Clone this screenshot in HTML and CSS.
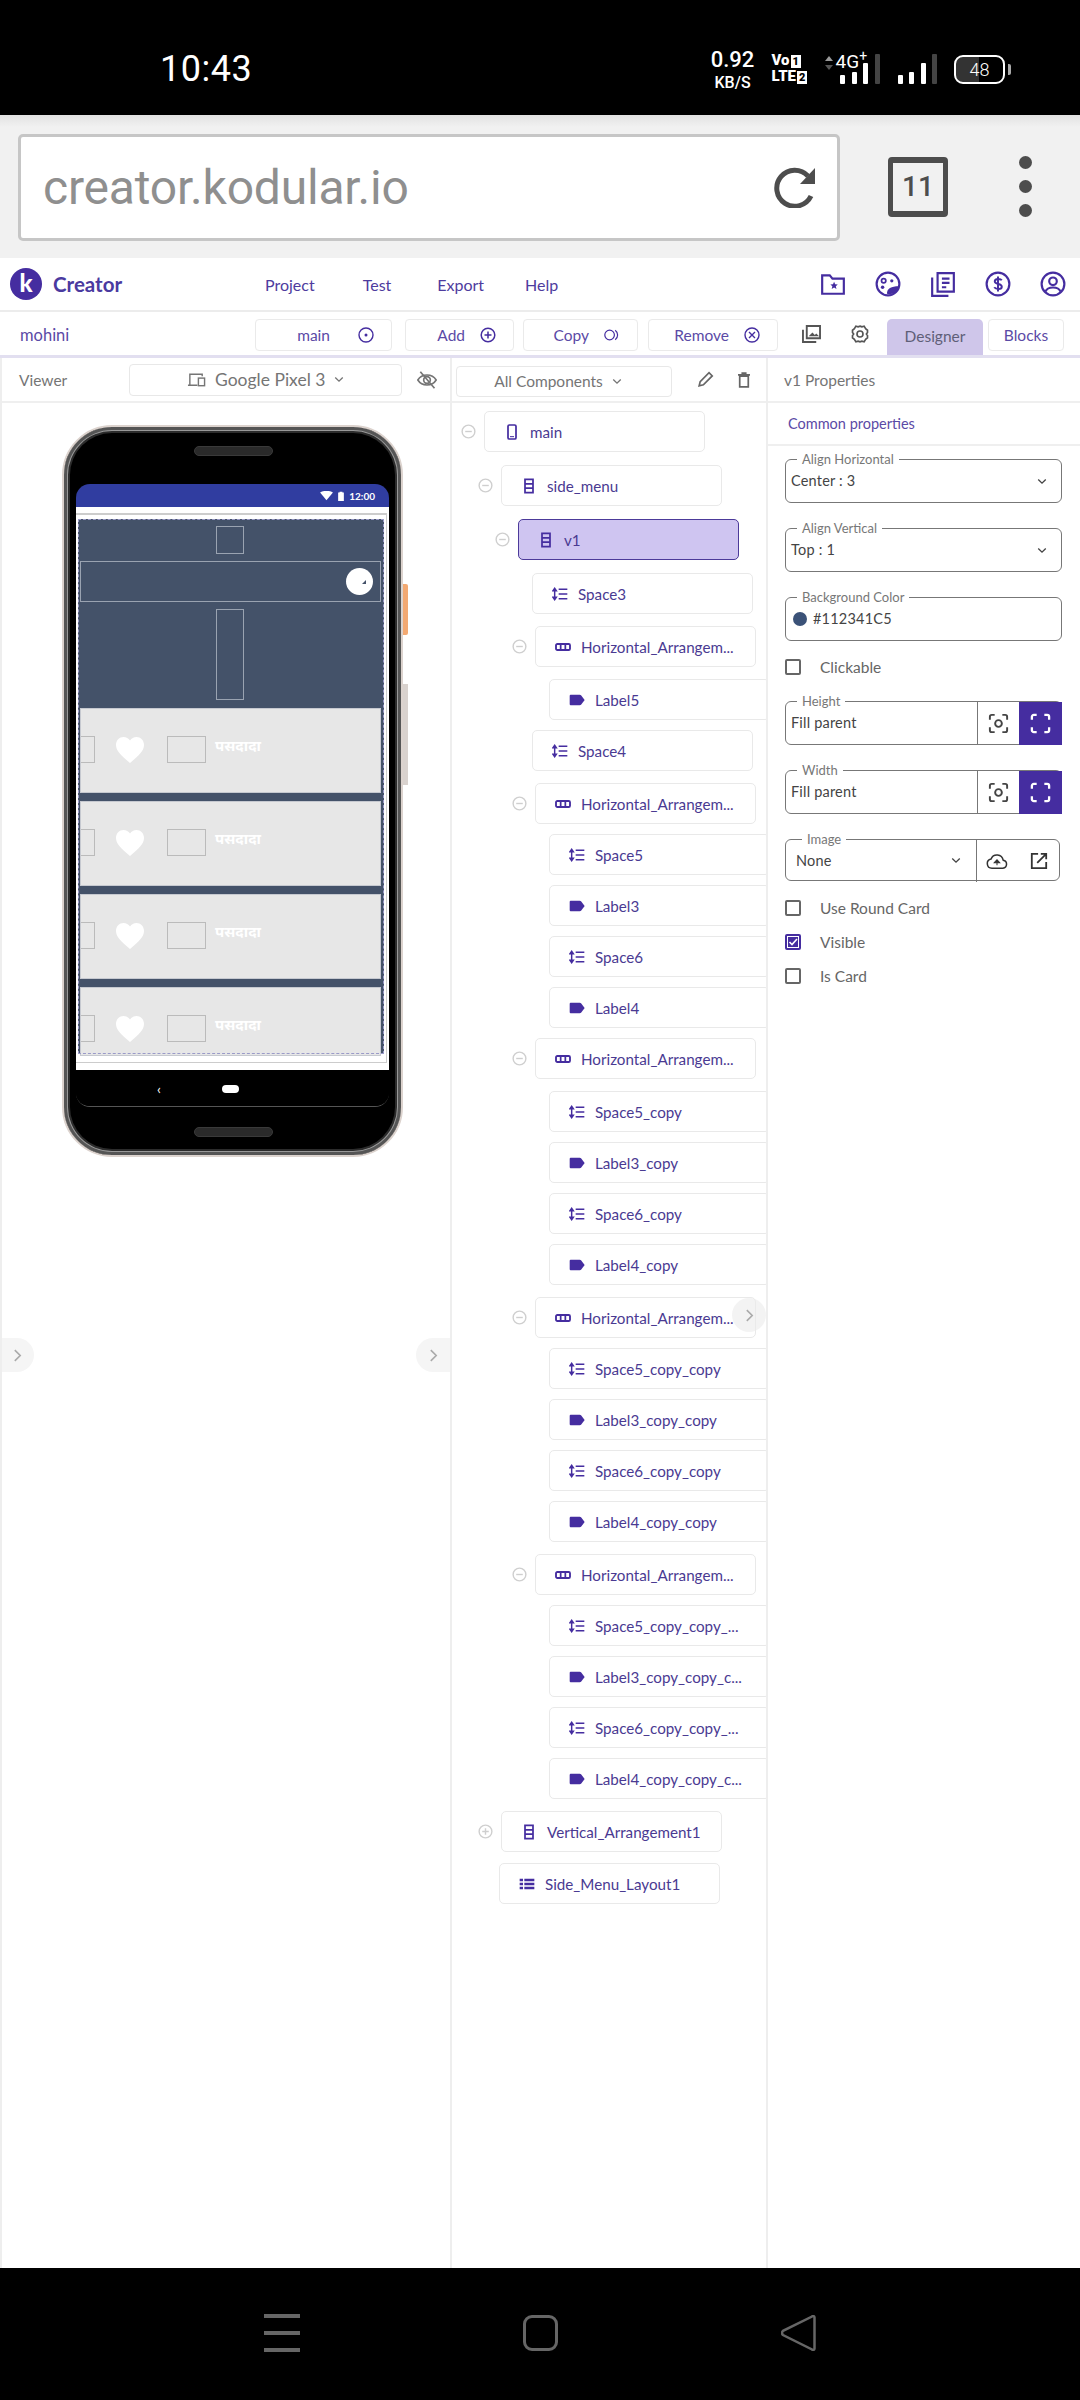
FILE: index.html

```html
<!DOCTYPE html>
<html lang="en">
<head>
  <meta charset="UTF-8">
  <title>Kodular Creator</title>
  <meta name="viewport" content="width=device-width, initial-scale=1.0">
  <link rel="stylesheet" href="styles.css">
</head>
<body>
  <svg class="defs" width="0" height="0">
    <symbol id="i-vert" viewBox="0 0 16 24"><path d="M2 2h12v20H2zM2 8.700h12M2 15.300h12" fill="none" stroke="currentColor" stroke-width="2.600"/></symbol>
    <symbol id="i-space" viewBox="0 0 24 20"><path d="M4 2v16M1.500 5 4 1.500 6.500 5zM1.500 15 4 18.500 6.500 15zM10 3h13M10 10h13M10 17h13" fill="currentColor" stroke="currentColor" stroke-width="2.200"/></symbol>
    <symbol id="i-horiz" viewBox="0 0 24 24"><rect x="1.500" y="7.500" width="21" height="9" rx="2" fill="none" stroke="currentColor" stroke-width="2.800"/><path d="M8.500 8v8M15.500 8v8" stroke="currentColor" stroke-width="2.600"/></symbol>
    <symbol id="i-label" viewBox="0 0 24 18"><path d="M3 1h13c1 0 1.800.4 2.400 1.200L23.500 9l-5.100 6.800c-.6.800-1.400 1.200-2.400 1.200H3c-1.200 0-2-.8-2-2V3c0-1.200.8-2 2-2z" fill="currentColor"/></symbol>
    <symbol id="i-minus" viewBox="0 0 16 16"><circle cx="8" cy="8" r="6.800" fill="none" stroke="currentColor" stroke-width="1.500"/><path d="M4.500 8h7" stroke="currentColor" stroke-width="1.500"/></symbol>
    <symbol id="i-plus" viewBox="0 0 16 16"><circle cx="8" cy="8" r="6.800" fill="none" stroke="currentColor" stroke-width="1.500"/><path d="M4.500 8h7M8 4.500v7" stroke="currentColor" stroke-width="1.500"/></symbol>
    <symbol id="i-chev" viewBox="0 0 12 8"><path d="M1.500 1.500 6 6l4.500-4.500" fill="none" stroke="currentColor" stroke-width="1.600"/></symbol>
    <symbol id="i-target" viewBox="0 0 24 24"><path d="M3 8V5c0-1 1-2 2-2h3M16 3h3c1 0 2 1 2 2v3M21 16v3c0 1-1 2-2 2h-3M8 21H5c-1 0-2-1-2-2v-3" fill="none" stroke="currentColor" stroke-width="2"/><circle cx="12" cy="12" r="3.500" fill="none" stroke="currentColor" stroke-width="2"/></symbol>
    <symbol id="i-full" viewBox="0 0 24 24"><path d="M3 8V5c0-1 1-2 2-2h3M16 3h3c1 0 2 1 2 2v3M21 16v3c0 1-1 2-2 2h-3M8 21H5c-1 0-2-1-2-2v-3" fill="none" stroke="currentColor" stroke-width="2.400"/></symbol>
    <symbol id="i-heart" viewBox="0 0 28 26"><path d="M14 26C5 18.500 0 14 0 7.800 0 3.200 3.400 0 7.500 0c2.700 0 5 1.300 6.500 3.500C15.500 1.300 17.800 0 20.500 0 24.600 0 28 3.200 28 7.800 28 14 23 18.500 14 26z" fill="#fff"/></symbol>
  </svg>

  <div class="status-bar">
    <span class="clock">10:43</span>
    <div class="status-right">
      <div class="speed"><b>0.92</b><span>KB/S</span></div>
      <div class="volte"><span>Vo<i>1</i></span><span>LTE<i>2</i></span></div>
      <div class="net">
        <svg class="net-arrows" viewBox="0 0 8 16"><path d="M4 1 8 6H0z" fill="#999"/><path d="m4 15 4-5H0z" fill="#555"/></svg>
        <span class="net-type">4G<sup>+</sup></span>
        <div class="bars"><u class="b1"></u><u class="b2"></u><u class="b3"></u><u class="b4 off"></u></div>
      </div>
      <div class="bars second"><u class="b1"></u><u class="b2"></u><u class="b3"></u><u class="b4 off"></u></div>
      <div class="battery"><span>48</span></div>
    </div>
  </div>

  <div class="browser-bar">
    <div class="url-box">
      <span class="url">creator.kodular.io</span>
      <svg class="reload" viewBox="0 0 42 42"><path d="M37 30a18 18 0 1 1-3-20" fill="none" stroke="#4d4d4d" stroke-width="5"/><path d="M41 2v16H26z" fill="#4d4d4d"/></svg>
    </div>
    <div class="tabs-count">11</div>
    <div class="dots"><i></i><i></i><i></i></div>
  </div>

  <div class="app-bar">
    <div class="brand"><span class="logo">k</span><span class="brand-name">Creator</span></div>
    <nav class="menu"><a>Project</a><a>Test</a><a>Export</a><a>Help</a></nav>
    <div class="app-icons">
      <svg viewBox="0 0 24 24"><path d="M2 4h7l2.500 3H22v14H2z" fill="none" stroke="currentColor" stroke-width="2"/><path d="m13 10 1 2.300 2.400.2-1.800 1.600.6 2.400-2.200-1.300-2.200 1.300.6-2.400-1.800-1.600 2.400-.2z" fill="currentColor"/></svg>
      <svg viewBox="0 0 24 24"><circle cx="12" cy="12" r="10.500" fill="none" stroke="currentColor" stroke-width="2"/><circle cx="8" cy="9" r="2" fill="none" stroke="currentColor" stroke-width="1.600"/><circle cx="15.500" cy="9" r="1.500" fill="currentColor"/><circle cx="7" cy="15" r="1.600" fill="currentColor"/><path d="M11 21c0-5 4-7 11-7-1 5-5 8-11 7z" fill="currentColor"/></svg>
      <svg viewBox="0 0 24 24"><path d="M7 2h15v17H7zM2 6v17h15" fill="none" stroke="currentColor" stroke-width="2"/><path d="M11 7h7M11 11h7M11 15h4" stroke="currentColor" stroke-width="2"/></svg>
      <svg viewBox="0 0 24 24"><circle cx="12" cy="12" r="10.500" fill="none" stroke="currentColor" stroke-width="2"/><path d="M15.500 8.500c-1-1.500-6.500-2-6.500 1 0 3.500 6.500 1.500 6.500 5 0 3-5.500 2.500-7 .5M12 5v14" fill="none" stroke="currentColor" stroke-width="1.800"/></svg>
      <svg viewBox="0 0 24 24"><circle cx="12" cy="12" r="10.500" fill="none" stroke="currentColor" stroke-width="2"/><circle cx="12" cy="9.500" r="3.500" fill="none" stroke="currentColor" stroke-width="2"/><path d="M5 19c2-5 12-5 14 0" fill="none" stroke="currentColor" stroke-width="2"/></svg>
    </div>
  </div>

  <div class="tool-bar">
    <span class="project">mohini</span>
    <button class="tool-btn btn-main">main <svg viewBox="0 0 16 16"><circle cx="8" cy="8" r="7" fill="none" stroke="currentColor" stroke-width="1.400"/><circle cx="8" cy="8" r="1.500" fill="currentColor"/></svg></button>
    <button class="tool-btn btn-add">Add <svg><use href="#i-plus"/></svg></button>
    <button class="tool-btn btn-copy">Copy <svg viewBox="0 0 20 16"><circle cx="7" cy="8" r="6" fill="none" stroke="currentColor" stroke-width="1.500"/><path d="M14 2c4 3 4 9 0 12" fill="none" stroke="currentColor" stroke-width="1.500"/></svg></button>
    <button class="tool-btn btn-remove">Remove <svg viewBox="0 0 16 16"><circle cx="8" cy="8" r="7" fill="none" stroke="currentColor" stroke-width="1.400"/><path d="m5 5 6 6M11 5l-6 6" stroke="currentColor" stroke-width="1.400"/></svg></button>
    <svg class="tool-icon gallery" viewBox="0 0 20 19"><path d="M5 1h14v13H5zM1 5v13h14" fill="none" stroke="currentColor" stroke-width="2"/><path d="m7 12 4-4 2.500 2.500L15 9l3 3z" fill="currentColor"/></svg>
    <svg class="tool-icon gear" viewBox="0 0 24 24"><path d="m12 1.500 2.500 1 3-1 2 3.500 2.500 2v3L20.500 12l1.500 2v3l-2.500 2-2 3.500-3-1-2.500 1-2.500-1-3 1-2-3.500L2 17v-3l1.500-2L2 10V7l2.500-2 2-3.500 3 1z" fill="none" stroke="currentColor" stroke-width="2.200"/><circle cx="12" cy="12" r="4" fill="none" stroke="currentColor" stroke-width="2.200"/></svg>
    <div class="tab active">Designer</div>
    <div class="tab">Blocks</div>
  </div>

  <div class="panels">
    <section class="viewer">
      <div class="panel-head">
        <span class="panel-title">Viewer</span>
        <div class="device-select">
          <svg viewBox="0 0 20 16"><path d="M3 13V2h13v2M1 13.500h10" fill="none" stroke="currentColor" stroke-width="1.500"/><rect x="12" y="6" width="6.500" height="8" fill="none" stroke="currentColor" stroke-width="1.500"/></svg>
          Google Pixel 3
          <svg class="chev"><use href="#i-chev"/></svg>
        </div>
        <svg class="eye-off" viewBox="0 0 24 24"><path d="M1 12c5-8 17-8 22 0-5 8-17 8-22 0z" fill="none" stroke="currentColor" stroke-width="2"/><circle cx="12" cy="12" r="4" fill="none" stroke="currentColor" stroke-width="2"/><path d="M4 2l17 20" stroke="currentColor" stroke-width="2"/></svg>
      </div>

      <div class="phone">
        <i class="side-key orange"></i>
        <i class="side-key grey"></i>
        <div class="speaker"></div>
        <div class="screen">
          <div class="android-status">
            <svg viewBox="0 0 18 14"><path d="M0 2c5-3 13-3 18 0l-9 11z" fill="#fff"/></svg>
            <svg class="batt" viewBox="0 0 8 14"><path d="M2 1h4v1h2v12H0V2h2z" fill="#fff"/></svg>
            <span>12:00</span>
          </div>
          <div class="form-frame">
            <div class="frame-line">
              <div class="form">
                <div class="box-square"></div>
                <div class="box-row"><span class="toggle"></span></div>
                <div class="box-tall"></div>
                <div class="song-card"><span class="box-cut"></span><svg class="heart"><use href="#i-heart"/></svg><span class="box-wide"></span><span class="song-name">पसदादा</span></div>
                <div class="song-card"><span class="box-cut"></span><svg class="heart"><use href="#i-heart"/></svg><span class="box-wide"></span><span class="song-name">पसदादा</span></div>
                <div class="song-card"><span class="box-cut"></span><svg class="heart"><use href="#i-heart"/></svg><span class="box-wide"></span><span class="song-name">पसदादा</span></div>
                <div class="song-card short"><span class="box-cut"></span><svg class="heart"><use href="#i-heart"/></svg><span class="box-wide"></span><span class="song-name">पसदादा</span></div>
              </div>
            </div>
          </div>
          <div class="android-nav"><span class="nav-back">‹</span><span class="nav-home"></span></div>
        </div>
        <div class="speaker bottom"></div>
      </div>

      <span class="edge-arrow left"><svg viewBox="0 0 10 14"><path d="m2 1 6 6-6 6" fill="none" stroke="currentColor" stroke-width="1.800"/></svg></span>
      <span class="edge-arrow right"><svg viewBox="0 0 10 14"><path d="m2 1 6 6-6 6" fill="none" stroke="currentColor" stroke-width="1.800"/></svg></span>
    </section>

    <section class="components">
      <div class="panel-head">
        <div class="filter-select">All Components <svg class="chev"><use href="#i-chev"/></svg></div>
        <svg class="head-icon pencil" viewBox="0 0 24 24"><path d="M3 21l1.500-6L17 2.500l4.500 4.500L9 19.500z" fill="none" stroke="currentColor" stroke-width="2.400"/></svg>
        <svg class="head-icon trash" viewBox="0 0 14 18"><path d="M2 4.500h10V17H2zM0 3h14M4 1h6" fill="none" stroke="currentColor" stroke-width="2"/></svg>
      </div>

      <div class="tree">
        <div class="row lvl0"><svg class="fold"><use href="#i-minus"/></svg><div class="node"><svg class="ico" viewBox="0 0 16 24"><rect x="2" y="1.500" width="12" height="21" rx="2" fill="none" stroke="currentColor" stroke-width="2.600"/><path d="M5 19h6" stroke="currentColor" stroke-width="1.500"/></svg><span>main</span></div></div>
        <div class="row lvl1 roomy"><svg class="fold"><use href="#i-minus"/></svg><div class="node"><svg class="ico"><use href="#i-vert"/></svg><span>side_menu</span></div></div>
        <div class="row lvl2 roomy"><svg class="fold"><use href="#i-minus"/></svg><div class="node selected"><svg class="ico"><use href="#i-vert"/></svg><span>v1</span></div></div>
        <div class="row lvl3 roomy"><div class="node"><svg class="ico"><use href="#i-space"/></svg><span>Space3</span></div></div>
        <div class="row lvl4 wide"><svg class="fold"><use href="#i-minus"/></svg><div class="node"><svg class="ico"><use href="#i-horiz"/></svg><span>Horizontal_Arrangem...</span></div></div>
        <div class="row lvl5 wide"><div class="node"><svg class="ico"><use href="#i-label"/></svg><span>Label5</span></div></div>
        <div class="row lvl3"><div class="node"><svg class="ico"><use href="#i-space"/></svg><span>Space4</span></div></div>
        <div class="row lvl4 wide"><svg class="fold"><use href="#i-minus"/></svg><div class="node"><svg class="ico"><use href="#i-horiz"/></svg><span>Horizontal_Arrangem...</span></div></div>
        <div class="row lvl5"><div class="node"><svg class="ico"><use href="#i-space"/></svg><span>Space5</span></div></div>
        <div class="row lvl5"><div class="node"><svg class="ico"><use href="#i-label"/></svg><span>Label3</span></div></div>
        <div class="row lvl5"><div class="node"><svg class="ico"><use href="#i-space"/></svg><span>Space6</span></div></div>
        <div class="row lvl5"><div class="node"><svg class="ico"><use href="#i-label"/></svg><span>Label4</span></div></div>
        <div class="row lvl4"><svg class="fold"><use href="#i-minus"/></svg><div class="node"><svg class="ico"><use href="#i-horiz"/></svg><span>Horizontal_Arrangem...</span></div></div>
        <div class="row lvl5 wide"><div class="node"><svg class="ico"><use href="#i-space"/></svg><span>Space5_copy</span></div></div>
        <div class="row lvl5"><div class="node"><svg class="ico"><use href="#i-label"/></svg><span>Label3_copy</span></div></div>
        <div class="row lvl5"><div class="node"><svg class="ico"><use href="#i-space"/></svg><span>Space6_copy</span></div></div>
        <div class="row lvl5"><div class="node"><svg class="ico"><use href="#i-label"/></svg><span>Label4_copy</span></div></div>
        <div class="row lvl4 wide"><svg class="fold"><use href="#i-minus"/></svg><div class="node"><svg class="ico"><use href="#i-horiz"/></svg><span>Horizontal_Arrangem...</span></div></div>
        <div class="row lvl5"><div class="node"><svg class="ico"><use href="#i-space"/></svg><span>Space5_copy_copy</span></div></div>
        <div class="row lvl5"><div class="node"><svg class="ico"><use href="#i-label"/></svg><span>Label3_copy_copy</span></div></div>
        <div class="row lvl5"><div class="node"><svg class="ico"><use href="#i-space"/></svg><span>Space6_copy_copy</span></div></div>
        <div class="row lvl5"><div class="node"><svg class="ico"><use href="#i-label"/></svg><span>Label4_copy_copy</span></div></div>
        <div class="row lvl4 wide"><svg class="fold"><use href="#i-minus"/></svg><div class="node"><svg class="ico"><use href="#i-horiz"/></svg><span>Horizontal_Arrangem...</span></div></div>
        <div class="row lvl5"><div class="node"><svg class="ico"><use href="#i-space"/></svg><span>Space5_copy_copy_...</span></div></div>
        <div class="row lvl5"><div class="node"><svg class="ico"><use href="#i-label"/></svg><span>Label3_copy_copy_c...</span></div></div>
        <div class="row lvl5"><div class="node"><svg class="ico"><use href="#i-space"/></svg><span>Space6_copy_copy_...</span></div></div>
        <div class="row lvl5"><div class="node"><svg class="ico"><use href="#i-label"/></svg><span>Label4_copy_copy_c...</span></div></div>
        <div class="row lvl1 wide"><svg class="fold"><use href="#i-plus"/></svg><div class="node"><svg class="ico"><use href="#i-vert"/></svg><span>Vertical_Arrangement1</span></div></div>
        <div class="row lvl-side side"><div class="node"><svg class="ico" viewBox="0 0 24 20"><path d="M1 2h5v4H1zM8 2h15v4H8zM1 8h5v4H1zM8 8h15v4H8zM1 14h5v4H1zM8 14h15v4H8z" fill="currentColor"/></svg><span>Side_Menu_Layout1</span></div></div>
      </div>

      <span class="tree-arrow"><svg viewBox="0 0 10 14"><path d="m2 1 6 6-6 6" fill="none" stroke="currentColor" stroke-width="1.800"/></svg></span>
    </section>

    <section class="props">
      <div class="panel-head"><span class="panel-title">v1 Properties</span></div>
      <div class="common">Common properties</div>

      <div class="prop-list">
        <fieldset class="field"><legend>Align Horizontal</legend><span class="value">Center : 3</span><svg class="chev"><use href="#i-chev"/></svg></fieldset>
        <fieldset class="field"><legend>Align Vertical</legend><span class="value">Top : 1</span><svg class="chev"><use href="#i-chev"/></svg></fieldset>
        <fieldset class="field"><legend>Background Color</legend><i class="swatch"></i><span class="value">#112341C5</span></fieldset>
        <label class="check clickable"><i class="box"></i>Clickable</label>
        <fieldset class="field sized"><legend>Height</legend><span class="value">Fill parent</span><span class="size-btn"><svg><use href="#i-target"/></svg></span><span class="size-btn on"><svg><use href="#i-full"/></svg></span></fieldset>
        <fieldset class="field sized"><legend>Width</legend><span class="value">Fill parent</span><span class="size-btn"><svg><use href="#i-target"/></svg></span><span class="size-btn on"><svg><use href="#i-full"/></svg></span></fieldset>
        <fieldset class="field image"><legend>Image</legend><span class="value">None</span><svg class="chev"><use href="#i-chev"/></svg>
          <span class="image-btns">
            <svg viewBox="0 0 26 20"><path d="M7 18.500a5.500 5.500 0 0 1-1-10.900 7.500 7.500 0 0 1 14.300 1.400A4.800 4.800 0 0 1 20 18.500z" fill="none" stroke="currentColor" stroke-width="1.800"/><path d="M13 15V9.500M9.800 12 13 8.500l3.200 3.500z" fill="currentColor" stroke="currentColor" stroke-width="1.200"/></svg>
            <svg viewBox="0 0 20 20"><path d="M9 2H2v16h16v-7M12 2h6v6M18 2 8 12" fill="none" stroke="currentColor" stroke-width="2"/></svg>
          </span>
        </fieldset>
        <label class="check"><i class="box"></i>Use Round Card</label>
        <label class="check"><i class="box on"><svg viewBox="0 0 12 12"><rect x=".5" y=".5" width="11" height="11" fill="none" stroke="#fff"/><path d="m2.500 6 2.500 2.500L10 3" fill="none" stroke="#fff" stroke-width="1.600"/></svg></i>Visible</label>
        <label class="check"><i class="box"></i>Is Card</label>
      </div>
    </section>
  </div>

  <div class="nav-bar">
    <div class="nav-menu"><i></i><i></i><i></i></div>
    <div class="nav-square"></div>
    <svg class="nav-tri" viewBox="0 0 35 36"><path d="M31 1.500c1-1 2.500-.5 2.500 1v31c0 1.500-1.500 2-2.500 1L2 20c-1.200-1.200-1.200-3 0-4.200z" fill="none" stroke="#666" stroke-width="2.500"/></svg>
  </div>
</body>
</html>
```

FILE: styles.css

```css
* { box-sizing: border-box; }
html, body { margin: 0; padding: 0; }
body { width: 1080px; height: 2400px; display: flex; flex-direction: column; font-family: Lato, "Noto Sans", sans-serif; color: #4e3b9e; background: #fff; overflow: hidden; }
.defs { position: absolute; }
svg { display: block; }
i { font-style: normal; }

/* phone status bar */
.status-bar { height: 115px; background: #000; color: #fff; display: flex; align-items: center; font-family: Roboto, sans-serif; padding: 23px 75px 0 160px; flex: none; }
.clock { font-size: 36px; letter-spacing: .5px; }
.status-right { margin-left: auto; display: flex; align-items: center; height: 40px; }
.speed { display: flex; flex-direction: column; align-items: center; width: 48px; margin-right: 15px; }
.speed b { font-weight: 500; font-size: 22px; line-height: 26px; }
.speed span { font-size: 16px; line-height: 19px; font-weight: 500; }
.volte { display: flex; flex-direction: column; font-size: 15px; font-weight: 900; line-height: 15px; width: 37px; margin-right: 16px; white-space: nowrap; }
.volte i { background: #fff; color: #000; font-size: 11px; padding: 0 2px; margin-left: 1px; }
.net { position: relative; width: 55px; height: 32px; margin-right: 18px; }
.net-arrows { position: absolute; left: 0; top: 2px; width: 8px; height: 16px; }
.net-type { position: absolute; left: 11px; top: 0; font-size: 19px; line-height: 17px; }
.net-type sup { font-size: 14px; line-height: 0; }
.net .bars { position: absolute; right: 0; bottom: 1px; }
.bars { display: flex; align-items: flex-end; gap: 6.500px; height: 30px; }
.bars u { display: block; width: 5px; background: #fff; border-radius: 1px; }
.bars .b1 { height: 9px; }
.bars .b2 { height: 12px; }
.bars .b3 { height: 21px; }
.bars .b4 { height: 30px; }
.bars .off { background: #444; }
.bars.second { margin-right: 17px; }
.battery { width: 51px; height: 29px; border: 2.500px solid #fff; border-radius: 9px; position: relative; display: flex; align-items: center; justify-content: center; font-size: 18px; font-weight: 300; background: linear-gradient(90deg, #333 48%, #000 48%); }
.battery::after { content: ""; position: absolute; right: -8px; top: 7px; width: 3px; height: 11px; background: #aaa; border-radius: 0 2px 2px 0; }

/* browser bar */
.browser-bar { height: 143px; flex: none; background: linear-gradient(#e2e2e2, #f1f1f1 12px); display: flex; align-items: center; position: relative; padding: 0 0 0 18px; }
.url-box { width: 822px; height: 107px; margin-top: 1px; background: #fff; border: 3px solid #c6c6c6; border-radius: 5px; display: flex; align-items: center; padding: 0 21px 0 22px; justify-content: space-between; }
.url { font-family: Roboto, sans-serif; font-size: 48px; color: #8f8f8f; letter-spacing: -.2px; }
.reload { width: 42px; height: 42px; }
.tabs-count { margin-left: 48px; width: 60px; height: 60px; border: 5px solid #4d4d4d; border-top-width: 6px; border-bottom-width: 6px; border-radius: 4px; font: 500 28px/48px Roboto, sans-serif; color: #4d4d4d; text-align: center; }
.dots { margin-left: 71px; display: flex; flex-direction: column; gap: 11px; }
.dots i { display: block; width: 13px; height: 13px; border-radius: 50%; background: #4d4d4d; }

/* app header */
.app-bar { height: 54px; flex: none; background: #fff; border-bottom: 2px solid #ececec; display: flex; align-items: center; padding: 0 14px 0 10px; }
.brand { display: flex; align-items: center; gap: 11px; width: 255px; }
.logo { width: 32px; height: 32px; border-radius: 50%; background: #452da0; color: #fff; font-weight: 900; font-size: 24px; line-height: 30px; text-align: center; }
.brand-name { font-size: 20.500px; font-weight: 700; color: #4a3aa0; }
.menu { display: flex; font-size: 16px; }
.menu a:nth-child(1) { margin-right: 48px; }
.menu a:nth-child(2) { margin-right: 46px; }
.menu a:nth-child(3) { margin-right: 41px; }
.app-icons { margin-left: auto; display: flex; gap: 29px; color: #452da0; }
.app-icons svg { width: 26px; height: 26px; }

/* toolbar */
.tool-bar { height: 46px; flex: none; border-bottom: 3px solid #e2dff0; display: flex; align-items: flex-start; padding: 7px 16px 0 20px; position: relative; font-size: 15.500px; }
.project { width: 235px; margin-top: 6px; font-size: 16.500px; color: #5b4aa6; }
.tool-btn { height: 32px; font: inherit; color: #5b4aa6; background: #fff; border: 1px solid #eaeaea; border-radius: 4px; display: flex; align-items: center; justify-content: flex-end; gap: 15px; padding: 0 17px; margin-right: 10px; }
.tool-btn svg { width: 16px; height: 16px; color: #452da0; }
.btn-main { width: 137px; margin-right: 13px; gap: 28px; }
.btn-add { width: 109px; margin-right: 9px; }
.btn-copy { width: 115px; margin-right: 10px; }
.btn-remove { width: 130px; margin-right: 24px; }
.tool-icon { color: #555; flex: none; margin-top: 6px; }
.tool-icon.gallery { width: 19px; height: 18px; margin-right: 30px; }
.tool-icon.gear { width: 18px; height: 18px; margin-right: 18px; }
.tab { height: 32px; width: 76px; border: 1px solid #eaeaea; border-radius: 4px; text-align: center; line-height: 30px; margin-left: 5px; color: #5b4aa6; }
.tab.active { width: 96px; height: 36px; background: #cfc6ea; border: none; border-radius: 5px 5px 0 0; margin: 0; line-height: 34px; color: #5f5f78; }

/* three columns */
.panels { flex: 1; display: grid; grid-template-columns: 450px 316px 314px; min-height: 0; }
.panels section { position: relative; min-width: 0; overflow: hidden; border-left: 2px solid #eee; }
.panel-head { height: 45px; border-bottom: 2px solid #efefef; display: flex; align-items: center; color: #757575; font-size: 17px; }
.panel-title { color: #757575; font-size: 15.500px; }
.viewer .panel-head { padding-left: 17px; }
.device-select { width: 273px; height: 32px; margin-left: 62px; border: 1px solid #e8e8e8; border-radius: 4px; display: flex; align-items: center; justify-content: center; gap: 9px; font-size: 17.500px; }
.device-select svg:first-child { width: 19px; height: 16px; }
.chev { width: 10px; height: 7px; }
.eye-off { width: 20px; height: 20px; margin-left: 15px; }

/* phone mockup */
.phone { position: relative; width: 341px; height: 732px; margin: 22px 0 0 60px; background: #000; border-radius: 50px; border: 2px solid #dcd3ce; box-shadow: inset 0 0 0 3px #555, inset 0 0 0 4px #999, inset 0 0 0 6px #2c2c2c; padding: 57px 12px 0; }
.side-key { position: absolute; right: -7px; display: block; width: 5px; }
.side-key.orange { top: 157px; height: 51px; background: #f3a972; border-radius: 0 2px 2px 0; }
.side-key.grey { top: 257px; height: 101px; background: #d9d2ce; }
.speaker { position: absolute; left: 130px; top: 19px; width: 79px; height: 10px; border-radius: 5px; background: #2a2a2a; border: 1px solid #3a3a3a; }
.speaker.bottom { top: auto; bottom: 18px; }
.screen { height: 623px; border-radius: 14px; overflow: hidden; border-bottom: 1px solid #555; }
.android-status { height: 23px; background: #303da0; color: #fff; display: flex; align-items: center; justify-content: flex-end; gap: 5px; padding-right: 14px; font-size: 10px; font-weight: 700; }
.android-status svg { width: 13px; height: 10px; }
.android-status .batt { width: 6px; height: 10px; }
.form-frame { height: 563px; background: #fff; padding-top: 6px; }
.frame-line { height: 550px; border-top: 2px solid #ccc; border-right: 1px solid #ccc; border-bottom: 1px solid #ccc; margin-right: 2px; padding: 4px 2px 0 2px; }
.form { height: 535px; background: #445269; padding: 0 3px 0 2px; outline: 1px dashed #9a9ac8; outline-offset: -1px; display: flex; flex-direction: column; align-items: stretch; }
.box-square { width: 28px; height: 28px; border: 1px solid #9aa3b1; margin: 7px 0 0 136px; flex: none; }
.box-row { height: 41px; margin-top: 7px; flex: none; border: 1px solid #9aa3b1; display: flex; align-items: center; justify-content: flex-end; padding-right: 7px; }
.toggle { width: 27px; height: 27px; border-radius: 50%; background: #fff; position: relative; }
.toggle::after { content: ""; position: absolute; right: 7px; top: 12px; border: 2px solid transparent; border-right-color: #445269; border-bottom-color: #445269; }
.box-tall { width: 28px; height: 91px; border: 1px solid #9aa3b1; margin: 7px 0 0 136px; flex: none; }
.song-card { height: 85px; flex: none; margin-top: 8px; background: #e7e7e7; border: 1px solid #c6c9d0; display: flex; align-items: flex-start; padding-top: 27px; }
.song-card.short { height: 69px; }
.box-cut { width: 14px; height: 27px; border: 1px solid #bbb; border-left: none; flex: none; }
.heart { width: 28px; height: 26px; margin: 1px 0 0 21px; flex: none; }
.box-wide { width: 39px; height: 27px; border: 1px solid #bbb; margin-left: 23px; flex: none; }
.song-name { color: #fff; font: 700 15px/20px "Noto Sans", sans-serif; margin: -1px 0 0 9px; }
.android-nav { height: 37px; background: #000; display: flex; align-items: center; color: #fff; padding-left: 81px; }
.nav-back { font-size: 14px; width: 65px; }
.nav-home { width: 17px; height: 8px; border-radius: 4px; background: #fff; }
.edge-arrow { position: absolute; top: 980px; width: 34px; height: 34px; border-radius: 17px; background: #f5f5f5; color: #aaa; display: flex; align-items: center; justify-content: center; }
.edge-arrow svg { width: 9px; height: 13px; }
.edge-arrow.left { left: -2px; border-radius: 0 17px 17px 0; }
.edge-arrow.right { right: 0; border-radius: 17px 0 0 17px; }

/* component tree */
.components .panel-head { padding-left: 4px; }
.filter-select { width: 216px; height: 31px; margin-top: 3px; padding-right: 12px; border: 1px solid #e8e8e8; border-radius: 4px; display: flex; align-items: center; justify-content: center; gap: 9px; font-size: 15.500px; }
.head-icon { color: #666; flex: none; }
.head-icon.pencil { width: 17px; height: 17px; margin-left: 25px; }
.head-icon.trash { width: 12px; height: 16px; margin-left: 24px; }
.tree { padding-top: 8px; font-size: 15.200px; color: #4a3a92; }
.row { height: 41px; margin-top: 10px; display: flex; align-items: center; position: relative; }
.row:first-child { margin-top: 0; }
.row.roomy { margin-top: 13px; }
.row.wide { margin-top: 12px; }
.row.side { margin-top: 11px; }
.node { width: 221px; height: 41px; flex: none; border: 1px solid #e9e9e9; border-radius: 5px; display: flex; align-items: center; background: #fff; }
.node.selected { background: #cfc5f1; border-color: #4c3a9a; }
.node span { white-space: nowrap; }
.fold { position: absolute; width: 15px; height: 15px; color: #cfcfcf; left: -23px; }
.ico { width: 16px; height: 16px; flex: none; margin: 0 10px 0 19px; color: #452da0; }
.lvl0 { margin-left: 32px; }
.lvl1 { margin-left: 49px; }
.lvl2 { margin-left: 66px; }
.lvl3 { margin-left: 80px; }
.lvl4 { margin-left: 83px; }
.lvl5 { margin-left: 97px; }
.lvl-side { margin-left: 47px; }
.tree-arrow { position: absolute; left: 280px; top: 940px; width: 34px; height: 34px; border-radius: 50%; background: rgba(235,235,235,.6); color: #aaa; display: flex; align-items: center; justify-content: center; }
.tree-arrow svg { width: 9px; height: 13px; }

/* properties */
.panel-head .panel-title:only-child { margin-left: 16px; }
.common { height: 43px; border-bottom: 2px solid #efefef; font-size: 14.500px; line-height: 41px; padding-left: 20px; color: #5b4aa6; }
.prop-list { padding: 5px 17px 0 17px; color: #666; font-size: 15.500px; }
.field { width: 277px; height: 52px; margin: 0 0 17px 0; padding: 0 14px 0 5px; border: 1px solid #777; border-radius: 6px; display: flex; align-items: center; position: relative; }
.field legend { font-size: 13px; line-height: 16px; color: #777; padding: 0 5px; margin-left: 6px; }
.field .value { color: #444; flex: 1; margin-top: -9px; font-size: 14.500px; letter-spacing: .2px; }
.field .chev { margin-top: -7px; color: #444; }
.swatch { width: 14px; height: 14px; border-radius: 50%; background: #3b5278; margin: -7px 6px 0 2px; flex: none; }
.check { display: flex; align-items: center; gap: 19px; height: 18px; margin-bottom: 16px; }
.box { width: 16px; height: 16px; flex: none; border: 2px solid #666; border-radius: 2px; background: #fff; }
.box.on { background: #452da0; border-color: #452da0; }
.box svg { width: 12px; height: 12px; }
.clickable { margin-top: 2px; margin-bottom: 17px; }
.field.sized { padding-right: 0; }
.size-btn { width: 43px; height: 43px; flex: none; display: flex; align-items: center; justify-content: center; color: #444; margin-top: -7px; margin-bottom: -1px; }
.size-btn svg { width: 23px; height: 23px; }
.field.sized .size-btn:not(.on) { border-left: 1px solid #777; width: 42px; }
.size-btn.on { background: #452da0; color: #fff; border-radius: 0; margin-right: -1px; }
.field.image { width: 275px; height: 50px; padding: 0 0 0 10px; margin-bottom: 18px; }
.field.image .value { margin-top: -7px; }
.field.image .chev { margin-right: 15px; }
.image-btns { width: 83px; height: 42px; margin-top: -7px; margin-bottom: -1px; border-left: 1px solid #777; display: flex; align-items: center; justify-content: space-between; padding: 0 11px 0 9px; color: #333; }
.image-btns svg { width: 22px; height: 18px; }
.image-btns svg:last-child { width: 18px; height: 18px; }

/* bottom nav */
.nav-bar { height: 132px; flex: none; background: #000; display: flex; align-items: center; position: relative; padding-left: 264px; }
.nav-menu { width: 36px; display: flex; flex-direction: column; gap: 13px; margin-top: -3px; }
.nav-menu i { height: 4px; background: #666; display: block; }
.nav-square { width: 35px; height: 36px; border: 3px solid #666; border-radius: 9px; margin: -3px 0 0 223px; }
.nav-tri { width: 35px; height: 36px; margin: -3px 0 0 223px; }
```
